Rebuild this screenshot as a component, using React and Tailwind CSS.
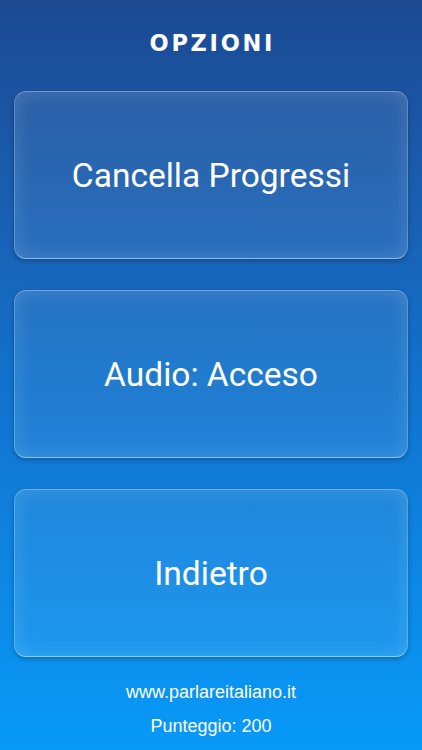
import React from "react";

const OptionButton = ({ label }) => {
  return (
    <button className="flex h-[168px] w-full items-center justify-center rounded-[12px] border border-white/25 border-t-white/35 border-b-white/50 bg-white/[0.07] pt-[3px] text-[33.5px] text-white shadow-[0_2px_5px_rgba(0,0,0,0.25),inset_0_0_20px_rgba(255,255,255,0.16)] font-['Roboto',sans-serif]">
      {label}
    </button>
  );
};

const App = () => {
  return (
    <div className="flex h-[750px] w-full flex-col bg-gradient-to-b from-[#1c4a93] via-[#1171cb] to-[#079af9] px-[14px]">
      <div className="flex h-[91px] items-center justify-center pb-[4px]">
        <h1 className="pl-[0.12em] text-[22.5px] font-bold tracking-[0.12em] text-white font-['DejaVu_Sans',sans-serif]">
          OPZIONI
        </h1>
      </div>

      <div className="flex flex-col gap-[31px]">
        <OptionButton label="Cancella Progressi" />
        <OptionButton label="Audio: Acceso" />
        <OptionButton label="Indietro" />
      </div>

      <div className="flex flex-col items-center pt-[22px] text-[18px] text-white font-['Liberation_Sans',sans-serif]">
        <p className="leading-[26px]">www.parlareitaliano.it</p>
        <p className="mt-[8px] leading-[26px]">Punteggio: 200</p>
      </div>
    </div>
  );
};

export default App;
